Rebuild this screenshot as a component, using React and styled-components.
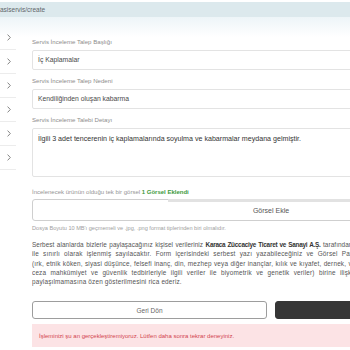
import styled, { createGlobalStyle } from "styled-components";

const GlobalStyle = createGlobalStyle`
  html, body {
    margin: 0;
    padding: 0;
    overflow: hidden;
    background: #fff;
  }
  body {
    font-family: "Liberation Sans", Arial, sans-serif;
  }
`;

const Page = styled.div`
  width: 350px;
  height: 350px;
  overflow: hidden;
`;

const AddressBar = styled.div`
  margin-top: 2px;
  height: 15px;
  background: #dce9ed;
  display: flex;
  align-items: center;
  font-size: 6.5px;
  color: #5f676b;
  white-space: nowrap;
`;

const Body = styled.div`
  display: flex;
  align-items: flex-start;
  gap: 16px;
  padding-top: 9px;
  background: linear-gradient(#edf5f8, #fff 20px);
`;

const Sidebar = styled.ul`
  list-style: none;
  margin: 0;
  padding: 0;
  width: 16px;
  flex-shrink: 0;
`;

const SideItem = styled.li`
  height: 24px;
  box-sizing: border-box;
  border-bottom: 1px solid #ececec;
  display: flex;
  align-items: center;
  justify-content: flex-end;
  padding-right: 5px;
`;

const Main = styled.div`
  width: 478px;
  flex-shrink: 0;
  padding-top: 12px;
`;

const Field = styled.div`
  margin-bottom: ${(p) => p.$gap || 7}px;
`;

const Label = styled.div`
  font-size: 6.1px;
  line-height: 8px;
  color: #8d8d8d;
  margin-bottom: 4px;
`;

const Input = styled.div`
  height: ${(p) => (p.$tall ? 49 : 20)}px;
  box-sizing: border-box;
  border: 1px solid #e3e3e3;
  border-radius: 2px;
  padding: ${(p) => (p.$tall ? "6px 5px" : "0 5px")};
  display: flex;
  align-items: ${(p) => (p.$tall ? "flex-start" : "center")};
  font-size: ${(p) => (p.$tall ? 7.1 : 6.8)}px;
  line-height: 8px;
  color: ${(p) => (p.$tall ? "#333" : "#4a4a4a")};
`;

const Note = styled.div`
  font-size: ${(p) => p.$size || 6}px;
  line-height: 8px;
  color: ${(p) => p.$color || "#959595"};
  margin-top: ${(p) => p.$top || 0}px;
  margin-bottom: ${(p) => p.$bottom || 0}px;
  white-space: nowrap;
`;

const Added = styled.span`
  color: #3c9a3c;
  font-weight: bold;
`;

const UploadButton = styled.div`
  position: relative;
  height: 22px;
  box-sizing: border-box;
  border: 1px solid #cfcfcf;
  border-radius: 3px;
  display: flex;
  align-items: center;
  justify-content: center;
  font-size: 7px;
  color: #555;

  &::before {
    content: "";
    position: absolute;
    top: -1px;
    left: 135px;
    right: 0;
    height: 3px;
    background: #e2e2e2;
  }
`;

const Paragraph = styled.div`
  margin-top: 8px;
  font-size: 6.4px;
  letter-spacing: 0.18px;
  line-height: 9.3px;
  color: #555;
`;

const Line = styled.div`
  text-align: justify;
  text-align-last: ${(p) => (p.$spread ? "justify" : "left")};
  letter-spacing: ${(p) => (p.$tight ? "0.06px" : "inherit")};
  height: 9.3px;
  overflow: hidden;
`;

const Strong = styled.b`
  color: #333;
  letter-spacing: -0.25px;
`;

const Buttons = styled.div`
  display: flex;
  gap: 8px;
  margin-top: 15px;
`;

const Button = styled.div`
  flex: 1;
  height: 18px;
  box-sizing: border-box;
  border-radius: 3px;
  display: flex;
  align-items: center;
  justify-content: center;
  font-size: 6.5px;
  color: ${(p) => (p.$dark ? "#fff" : "#666")};
  background: ${(p) => (p.$dark ? "#363636" : "#fff")};
  border: 1px solid ${(p) => (p.$dark ? "#363636" : "#9d9d9d")};
`;

const ErrorBox = styled.div`
  margin-top: 5px;
  height: 23px;
  background: #fce3e5;
  display: flex;
  align-items: center;
  padding-left: 7px;
  font-size: 6px;
  color: #d2434e;
  white-space: nowrap;
`;

const Chevron = () => (
  <svg width="4" height="7" viewBox="0 0 4 7" fill="none">
    <path d="M0.6 0.6 L3.3 3.5 L0.6 6.4" stroke="#666" strokeWidth="0.8" />
  </svg>
);

export default function App() {
  return (
    <Page>
      <GlobalStyle />
      <AddressBar>asiservis/create</AddressBar>
      <Body>
        <Sidebar>
          {[0, 1, 2, 3, 4, 5].map((i) => (
            <SideItem key={i}>
              <Chevron />
            </SideItem>
          ))}
        </Sidebar>
        <Main>
          <Field>
            <Label>Servis İnceleme Talep Başlığı</Label>
            <Input>İç Kaplamalar</Input>
          </Field>
          <Field>
            <Label>Servis İnceleme Talep Nedeni</Label>
            <Input>Kendiliğinden oluşan kabarma</Input>
          </Field>
          <Field $gap={11}>
            <Label>Servis İnceleme Talebi Detayı</Label>
            <Input $tall>
              İlgili 3 adet tencerenin iç kaplamalarında soyulma ve kabarmalar meydana gelmiştir.
            </Input>
          </Field>
          <Note $bottom={3}>
            İncelenecek ürünün olduğu tek bir görsel <Added>1 Görsel Eklendi</Added>
          </Note>
          <UploadButton>Görsel Ekle</UploadButton>
          <Note $top={3} $size={5.6} $color="#a0a0a0">
            Dosya Boyutu 10 MB'ı geçmemeli ve .jpg, .png format tiplerinden biri olmalıdır.
          </Note>
          <Paragraph>
            <Line $tight>
              Serbest alanlarda bizlerle paylaşacağınız kişisel verileriniz{" "}
              <Strong>Karaca Züccaciye Ticaret ve Sanayi A.Ş.</Strong> tarafından yalnızca servis
              inceleme talebinizin değerlendirilmesi amacı ile sınırlı olarak işlenmiş
            </Line>
            <Line>
              ile sınırlı olarak işlenmiş sayılacaktır. Form içerisindeki serbest yazı
              yazabileceğiniz ve Görsel Paylaşım alanlarında özel nitelikli kişisel verilerinizin
              paylaşılmaması gerekmektedir
            </Line>
            <Line>
              (ırk, etnik köken, siyasi düşünce, felsefi inanç, din, mezhep veya diğer inançlar,
              kılık ve kıyafet, dernek, vakıf ya da sendika üyeliği, sağlık, cinsel hayat, ceza
              mahkûmiyeti
            </Line>
            <Line $spread>
              ceza mahkûmiyet ve güvenlik tedbirleriyle ilgili veriler ile biyometrik ve genetik
              veriler) birine ilişkin bilgilerinizin sistemlerimize yüklenmemesine ve
            </Line>
            <Line>paylaşılmamasına özen gösterilmesini rica ederiz.</Line>
          </Paragraph>
          <Buttons>
            <Button>Geri Dön</Button>
            <Button $dark>Gönder</Button>
          </Buttons>
          <ErrorBox>
            İşleminizi şu an gerçekleştiremiyoruz. Lütfen daha sonra tekrar deneyiniz.
          </ErrorBox>
        </Main>
      </Body>
    </Page>
  );
}
